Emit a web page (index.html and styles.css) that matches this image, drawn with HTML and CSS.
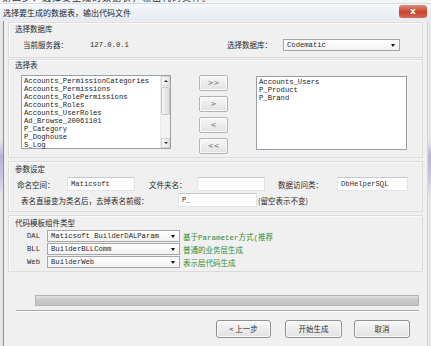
FILE: index.html
```html
<!DOCTYPE html>
<html lang="zh-CN">
<head>
  <meta charset="UTF-8">
  <title>选择要生成的数据表，输出代码文件</title>
  <link rel="stylesheet" href="styles.css">
</head>
<body>
  <div class="topcut"><span>第四步：选择要生成的数据表，输出代码文件。</span></div>
  <div class="titlebar">
    <span class="title">选择要生成的数据表，输出代码文件</span>
    <span class="close">x</span>
  </div>
  <div class="frame">
    <div class="client">

      <!-- 选择数据库 -->
      <div class="group g-db">
        <div class="legend">选择数据库</div>
        <div class="row db-row">
          <span class="lbl w-server">当前服务器：</span>
          <span class="mono w-ip">127.0.0.1</span>
          <span class="lbl w-dblbl">选择数据库：</span>
          <div class="combo w-db"><span class="mono">Codematic</span><i class="arrow"></i></div>
        </div>
      </div>

      <!-- 选择表 -->
      <div class="group g-table">
        <div class="legend">选择表</div>
        <div class="row list-row">
          <div class="listbox left-list">
            <ul class="mono">
              <li>Accounts_PermissionCategories</li>
              <li>Accounts_Permissions</li>
              <li>Accounts_RolePermissions</li>
              <li>Accounts_Roles</li>
              <li>Accounts_UserRoles</li>
              <li>Ad_Browse_20061101</li>
              <li>P_Category</li>
              <li>P_Doghouse</li>
              <li>S_Log</li>
            </ul>
            <div class="vscroll">
              <span class="sbtn up"></span>
              <span class="thumb"></span>
              <span class="track"></span>
              <span class="sbtn down"></span>
            </div>
          </div>
          <div class="move-btns">
            <button class="btn small">&gt;&gt;</button>
            <button class="btn small">&gt;</button>
            <button class="btn small">&lt;</button>
            <button class="btn small">&lt;&lt;</button>
          </div>
          <div class="listbox right-list">
            <ul class="mono">
              <li>Accounts_Users</li>
              <li>P_Product</li>
              <li>P_Brand</li>
            </ul>
          </div>
        </div>
      </div>

      <!-- 参数设定 -->
      <div class="group g-param">
        <div class="legend">参数设定</div>
        <div class="row param-row1">
          <span class="lbl w-ns">命名空间：</span>
          <div class="textbox w-in1 mono">Maticsoft</div>
          <span class="lbl w-folder">文件夹名：</span>
          <div class="textbox w-in2 mono"></div>
          <span class="lbl w-dal">数据访问类：</span>
          <div class="textbox w-in3 mono">DbHelperSQL</div>
        </div>
        <div class="row param-row2">
          <span class="lbl w-prefix">表名直接变为类名后，去掉表名前缀：</span>
          <div class="textbox w-in4 mono">P_</div>
          <span class="lbl note">(留空表示不变)</span>
        </div>
      </div>

      <!-- 代码模板组件类型 -->
      <div class="group g-tpl">
        <div class="legend">代码模板组件类型</div>
        <div class="row tpl-row first">
          <span class="mono w-layer">DAL</span>
          <div class="combo w-tpl"><span class="mono">Maticsoft BuilderDALParam</span><i class="arrow"></i></div>
          <span class="hint">基于Parameter方式(推荐</span>
        </div>
        <div class="row tpl-row">
          <span class="mono w-layer">BLL</span>
          <div class="combo w-tpl"><span class="mono">BuilderBLLComm</span><i class="arrow"></i></div>
          <span class="hint">普通的业务层生成</span>
        </div>
        <div class="row tpl-row">
          <span class="mono w-layer">Web</span>
          <div class="combo w-tpl"><span class="mono">BuilderWeb</span><i class="arrow"></i></div>
          <span class="hint">表示层代码生成</span>
        </div>
      </div>

      <div class="progress"></div>
      <div class="separator"></div>

      <div class="footer">
        <button class="btn big b-prev">&lt; 上一步</button>
        <button class="btn big b-start">开始生成</button>
        <button class="btn big b-cancel">取消</button>
      </div>
    </div>
  </div>
</body>
</html>
```

FILE: styles.css
```css
* {
  box-sizing: border-box;
}
html, body {
  margin: 0;
  padding: 0;
}
body {
  width: 431px;
  height: 346px;
  overflow: hidden;
  background-color: #f0f0f0;
  font-family: "Noto Sans CJK SC", "DejaVu Sans", sans-serif;
  font-size: 7.5px;
  color: #2a2a2a;
}
ul {
  list-style: none;
  margin: 0;
  padding: 0;
}
.mono {
  font-family: "Liberation Mono", "Noto Sans CJK SC", monospace;
  font-size: 7.2px;
}

/* top strip cut off from previous window */
.topcut {
  height: 3px;
  overflow: hidden;
  background-color: #f4f4f4;
}
.topcut span {
  display: block;
  margin-top: -7px;
  padding-left: 2px;
  font-size: 9px;
  line-height: 10px;
  color: #333;
  letter-spacing: 1px;
}

/* title bar */
.titlebar {
  height: 18px;
  display: flex;
  align-items: center;
  justify-content: space-between;
  padding-left: 3px;
  background: linear-gradient(to bottom, #f5f8fb, #e4eaf1);
  border-top: 1px solid #d7dde5;
}
.title {
  font-size: 8px;
  color: #1e1e1e;
}
.close {
  width: 28px;
  height: 13px;
  margin-right: 4px;
  margin-top: -2px;
  border-radius: 3px;
  background: linear-gradient(to bottom, #e0897c, #c8432f 55%, #d86a55);
  color: #fff;
  font-family: "DejaVu Sans", sans-serif;
  font-weight: bold;
  font-size: 9px;
  line-height: 12px;
  text-align: center;
}

/* window frame */
.frame {
  height: 325px;
  display: flex;
  background: linear-gradient(to bottom, #e6e6ea 0, #e6e6ea 120px, #b9b2dc 135px, #c9c2e6 155px, #e6e6ea 175px, #e6e6ea 100%);
  padding-left: 3px;
}
.client {
  flex: 1;
  border-left: 1px solid #8d8d8d;
  border-right: 1px solid #d6d6d6;
  margin-right: 3px;
  background-color: #f0f0f0;
}

/* group boxes */
.group {
  margin-left: 4px;
  width: 415px;
  border: 1px solid #dcdcdc;
  box-shadow: inset 1px 1px 0 #fafafa;
}
.legend {
  padding-left: 6px;
  line-height: 10px;
  height: 10px;
}
.row {
  display: flex;
  align-items: center;
}
.lbl {
  white-space: nowrap;
}

.g-db {
  margin-top: 1px;
  height: 36px;
  padding-top: 1px;
}
.db-row {
  margin-top: 4px;
  height: 13px;
  padding-left: 14px;
}
.w-server { width: 67px; }
.w-ip { width: 137px; }
.w-dblbl { width: 56px; }
.w-db { width: 117px; }

.combo {
  position: relative;
  height: 12px;
  border: 1px solid #a6a6a6;
  background: linear-gradient(to bottom, #ffffff, #f2f2f2);
  display: flex;
  align-items: center;
  padding-left: 3px;
  line-height: 10px;
}
.arrow {
  position: absolute;
  right: 4px;
  top: 4px;
  width: 0;
  height: 0;
  border-left: 2.5px solid transparent;
  border-right: 2.5px solid transparent;
  border-top: 3px solid #111;
}

/* tables */
.g-table {
  margin-top: 1px;
  height: 99px;
}
.list-row {
  margin-top: 5px;
  padding-left: 12px;
  align-items: flex-start;
}
.listbox {
  background-color: #fff;
  border: 1px solid #9a9ea6;
  display: flex;
}
.listbox ul {
  flex: 1;
  padding: 1px 0 0 2px;
}
.listbox li {
  line-height: 8px;
  height: 8px;
  white-space: nowrap;
  color: #1a1a1a;
}
.left-list {
  width: 150px;
  height: 74px;
}
.right-list {
  width: 151px;
  height: 74px;
  margin-top: 1px;
}
.vscroll {
  width: 10px;
  display: flex;
  flex-direction: column;
  background-color: #f2f2f2;
  border-left: 1px solid #ececec;
}
.sbtn {
  position: relative;
  height: 10px;
  background: linear-gradient(to right, #f8f8f8, #e6e6e6);
  border: 1px solid #d4d4d4;
}
.sbtn::after {
  content: "";
  position: absolute;
  left: 2px;
  top: 3px;
  border-left: 2px solid transparent;
  border-right: 2px solid transparent;
}
.sbtn.up::after {
  border-bottom: 2px solid #333;
}
.sbtn.down::after {
  border-top: 2px solid #333;
}
.thumb {
  height: 28px;
  margin-top: 1px;
  background: linear-gradient(to right, #f4f4f4, #dcdcdc);
  border: 1px solid #c6c6c6;
  border-radius: 1px;
}
.track {
  flex: 1;
}

.move-btns {
  margin-left: 28px;
  width: 29px;
  display: flex;
  flex-direction: column;
  gap: 5px;
}
.right-list {
  margin-left: 28px;
}

.btn {
  font-family: "Noto Sans CJK SC", "DejaVu Sans", sans-serif;
  color: #333;
  padding: 0;
  border: 1px solid #b3b3b3;
  border-radius: 2px;
  background: linear-gradient(to bottom, #f8f8f8, #ececec 50%, #e2e2e2);
  box-shadow: inset 0 0 0 1px #fbfbfb;
}
.btn.small {
  height: 16px;
  font-family: "DejaVu Sans", sans-serif;
  font-size: 7px;
  line-height: 14px;
  color: #666;
}

/* params */
.g-param {
  margin-top: 3px;
  height: 51px;
  padding-top: 2px;
}
.param-row1 {
  margin-top: 3px;
  height: 14px;
  padding-left: 8px;
}
.param-row2 {
  margin-top: 2px;
  height: 14px;
  padding-left: 12px;
}
.textbox {
  height: 14px;
  background-color: #fff;
  border: 1px solid #e2e3e6;
  border-top-color: #c5c8cd;
  padding-left: 3px;
  line-height: 12px;
}
.w-ns { width: 50px; }
.w-in1 { width: 68px; }
.w-folder { width: 48px; margin-left: 14px; }
.w-in2 { width: 68px; }
.w-dal { width: 59px; margin-left: 13px; }
.w-in3 { width: 71px; }
.w-prefix { width: 157px; }
.w-in4 { width: 79px; }
.note { margin-left: 1px; }

/* templates */
.g-tpl {
  margin-top: 3px;
  height: 57px;
  padding-top: 2px;
}
.tpl-row {
  margin-top: 1px;
  height: 12px;
  padding-left: 18px;
}
.tpl-row.first {
  margin-top: 2px;
}
.w-layer { width: 20px; }
.w-tpl { width: 133px; }
.hint {
  margin-left: 3px;
  color: #2f8f2f;
  font-family: "Liberation Mono", "Noto Sans CJK SC", monospace;
  font-size: 7.5px;
  white-space: nowrap;
}

/* progress and footer */
.progress {
  margin: 23px 0 0 31px;
  width: 384px;
  height: 11px;
  border: 1px solid #b4b4b4;
  background: linear-gradient(to bottom, #e2e2e2, #c9c9c9 40%, #c2c2c2);
}
.separator {
  margin: 4px 0 0 12px;
  width: 403px;
  height: 2px;
  border-top: 1px solid #a8a8a8;
  border-bottom: 1px solid #ffffff;
}
.footer {
  display: flex;
  margin-top: 8px;
  padding-left: 212px;
}
.btn.big {
  height: 18px;
  font-size: 7.5px;
  line-height: 16px;
  border-color: #8e8f8f;
  border-radius: 3px;
}
.b-prev { width: 55px; }
.b-start { width: 57px; margin-left: 14px; }
.b-cancel { width: 56px; margin-left: 12px; }
```
